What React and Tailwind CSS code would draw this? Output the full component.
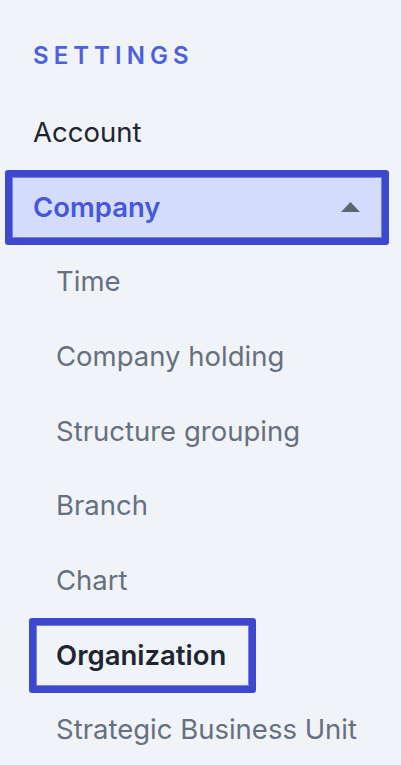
const subItems = [
  "Time",
  "Company holding",
  "Structure grouping",
  "Branch",
  "Chart",
  "Organization",
  "Strategic Business Unit"
];

const ACTIVE = "Organization";

export default function App() {
  return (
    <div
      className="min-h-[765px] w-[401px] bg-[#f0f4f9] pl-[5px] pr-[12px]"
      style={{ fontFamily: "Inter, 'Noto Sans', sans-serif" }}
    >
      <div className="h-[95px] pl-[28px] pt-[38px]">
        <div className="text-[24px] font-semibold leading-[36px] tracking-[0.21em] text-[#4d60e2]">
          SETTINGS
        </div>
      </div>

      <nav className="flex flex-col">
        <div className="flex h-[74.67px] items-center border-[7px] border-transparent pl-[21px] text-[27.5px] text-[#1f2530]">
          Account
        </div>

        <div className="flex h-[75px] items-center justify-between rounded-[3px] border-[7px] border-[#3e48cf] bg-[#d4dcfd] pl-[21px] pr-[22px] shadow-[inset_0_0_0_1px_#7480e8]">
          <span className="text-[27.5px] font-semibold text-[#4557da]">Company</span>
          <svg width="19" height="10" viewBox="0 0 19 10">
            <path d="M9.5 0 L19 10 L0 10 Z" fill="#5d6772" />
          </svg>
        </div>

        {subItems.map((item) =>
          item === ACTIVE ? (
            <div key={item} className="ml-[24px] flex h-[74.67px] items-center">
              <div className="flex h-full items-center rounded-[3px] border-[7px] border-[#3e48cf] pl-[20px] pr-[23px] shadow-[inset_0_0_0_1px_#7480e8]">
                <span className="text-[27.5px] font-semibold text-[#1f2530]">{item}</span>
              </div>
            </div>
          ) : (
            <div
              key={item}
              className="ml-[24px] flex h-[74.67px] items-center border-[7px] border-transparent pl-[20px] text-[27.5px] text-[#667080]"
            >
              {item}
            </div>
          )
        )}
      </nav>
    </div>
  );
}
